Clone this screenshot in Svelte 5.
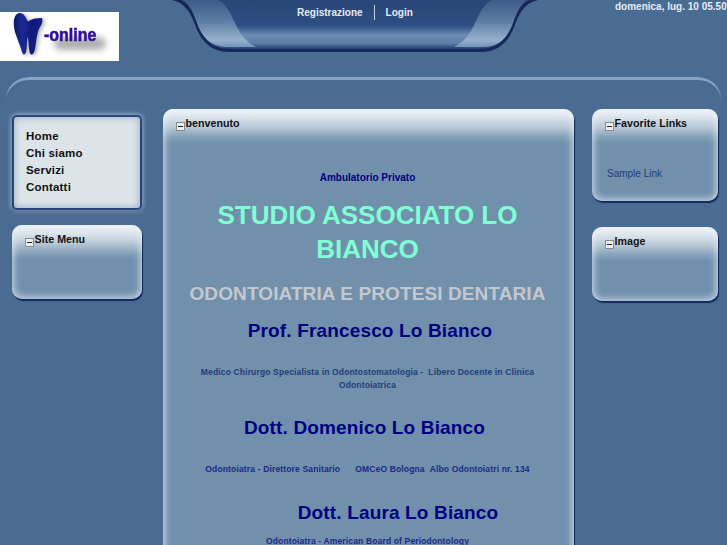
<script>
	const menu = ['Home', 'Chi siamo', 'Servizi', 'Contatti'];
</script>

<div class="page">
	<header class="top">
		<div class="logo">
			<svg class="tooth" width="34" height="46" viewBox="0 0 34 46">
				<defs>
					<linearGradient id="toothFill" x1="0" x2="1" y1="0" y2="0">
						<stop offset="0" stop-color="#0c1668" />
						<stop offset="0.3" stop-color="#1c2a96" />
						<stop offset="0.6" stop-color="#101a78" />
						<stop offset="1" stop-color="#141f86" />
					</linearGradient>
				</defs>
				<path d="M2 8 C3 3 5 1 8 1 C11 1 13 4 14 6 C15 8 15.5 9 16 9.5 C18 8 20 7 23 6.5 L30 6 C31 9 30 12 28 15 C25 20 24.5 28 23.5 34 C23 38 22 42 20 42.5 C18 43 17.5 40 17 36 C16.5 32 16.5 27 15.5 25 C15 28 15 36 14 40 C13 43.5 11 43 10 40 C8 33 5 26 3 20 C2 16 1.5 12 2 8 Z" fill="url(#toothFill)" />
			</svg>
			<div class="blur"></div>
			<span class="logo-text">-online</span>
		</div>

		<div class="notch">
			<svg width="366" height="53" viewBox="0 0 366 53">
				<defs>
					<linearGradient id="notchBody" x1="0" x2="0" y1="0" y2="1">
						<stop offset="0" stop-color="#284678" />
						<stop offset="0.52" stop-color="#2f4f82" />
						<stop offset="0.72" stop-color="#6a8cb4" />
						<stop offset="0.88" stop-color="#5e7fa8" />
						<stop offset="1" stop-color="#223c70" />
					</linearGradient>
					<linearGradient id="notchSide" x1="0" x2="0" y1="0" y2="1">
						<stop offset="0" stop-color="#3d5c8a" />
						<stop offset="0.45" stop-color="#5c7da4" />
						<stop offset="0.85" stop-color="#96b1cc" />
						<stop offset="1" stop-color="#7394ba" />
					</linearGradient>
				</defs>
				<path d="M0 0 C12 3 17 10 22 22 C28 40 38 52 58 52 L308 52 C328 52 338 40 344 22 C349 10 354 3 366 0 Z" fill="#16275a" />
				<path d="M9 0 C17 4 21 11 25 22 C31 38 40 49 58 49 L308 49 C326 49 335 38 341 22 C345 11 349 4 357 0 Z" fill="url(#notchBody)" />
				<path d="M11 0 C18 5 21 12 25 23 C30 37 38 46 54 47 L84 47 C72 41 66 30 61 19 C57 9 52 3 46 0 Z" fill="url(#notchSide)" />
				<path d="M355 0 C348 5 345 12 341 23 C336 37 328 46 312 47 L282 47 C294 41 300 30 305 19 C309 9 314 3 320 0 Z" fill="url(#notchSide)" />
			</svg>
			<nav class="user-links">
				<span>Registrazione</span>
				<i></i>
				<span>Login</span>
			</nav>
		</div>

		<div class="date">domenica, lug. 10 05.50</div>
	</header>

	<div class="band"></div>

	<main class="columns">
		<aside class="left">
			<nav class="menu">
				{#each menu as item}
					<div>{item}</div>
				{/each}
			</nav>
			<section class="panel site-menu">
				<h3><span class="toggle"></span>Site Menu</h3>
			</section>
		</aside>

		<section class="panel center">
			<h3><span class="toggle"></span>benvenuto</h3>
			<div class="body">
				<p class="lead">Ambulatorio Privato</p>
				<h1>STUDIO ASSOCIATO LO BIANCO</h1>
				<h2>ODONTOIATRIA E PROTESI DENTARIA</h2>
				<h4 class="first">Prof. Francesco Lo Bianco</h4>
				<p class="note">Medico Chirurgo Specialista in Odontostomatologia - &nbsp;Libero Docente in Clinica Odontoiatrica</p>
				<h4 class="second">Dott. Domenico Lo Bianco</h4>
				<p class="note dark">Odontoiatra - Direttore Sanitario &nbsp; &nbsp; &nbsp;OMCeO Bologna &nbsp;Albo Odontoiatri nr. 134</p>
				<h4 class="third">Dott. Laura Lo Bianco</h4>
				<p class="note dark last">Odontoiatra - American Board of Periodontology</p>
			</div>
		</section>

		<aside class="right">
			<section class="panel favorites">
				<h3><span class="toggle"></span>Favorite Links</h3>
				<a href="#top">Sample Link</a>
			</section>
			<section class="panel image">
				<h3><span class="toggle"></span>Image</h3>
			</section>
		</aside>
	</main>
</div>

<style>
	:global(body) {
		margin: 0;
		background: #4a6b92;
	}

	.page {
		height: 545px;
		overflow: hidden;
		font-family: 'Liberation Sans', Arial, sans-serif;
		background: #4a6b92;
	}

	.top {
		display: flex;
		height: 77px;
	}

	.logo {
		position: relative;
		flex: none;
		width: 119px;
		height: 49px;
		margin-top: 12px;
		background: #fff;
	}

	.tooth {
		position: absolute;
		left: 12px;
		top: 0;
		filter: drop-shadow(2px 1px 2px #aaa);
	}

	.blur {
		position: absolute;
		left: 54px;
		top: 25px;
		width: 52px;
		height: 13px;
		border-radius: 8px;
		background: #b0b0b0;
		filter: blur(3px);
	}

	.logo-text {
		position: absolute;
		left: 44px;
		top: 11px;
		font-size: 19px;
		font-weight: 700;
		line-height: 24px;
		color: #300f98;
		-webkit-text-stroke: 0.6px #300f98;
		transform: scaleX(0.84);
		transform-origin: left center;
	}

	.notch {
		position: relative;
		flex: none;
		width: 366px;
		height: 53px;
		margin-left: 53px;
	}

	.notch svg {
		display: block;
	}

	.user-links {
		position: absolute;
		left: 125px;
		top: 4px;
		display: flex;
		align-items: center;
		gap: 11px;
		height: 16px;
		font-size: 10px;
		font-weight: 700;
		color: #e6ecf2;
	}

	.user-links i {
		width: 1px;
		height: 15px;
		background: #c3d0de;
	}

	.date {
		flex: none;
		margin-left: 77px;
		padding-top: 1px;
		font-size: 10px;
		font-weight: 700;
		line-height: 12px;
		white-space: nowrap;
		color: #e6ecf2;
	}

	.band {
		box-sizing: border-box;
		height: 32px;
		margin: 0 5px;
		border-top: 3px solid #86a3c2;
		border-left: 1px solid #7c9abb;
		border-right: 1px solid #7c9abb;
		border-radius: 24px 24px 0 0;
		-webkit-mask: linear-gradient(#000, #000 10px, transparent 26px);
		mask: linear-gradient(#000, #000 10px, transparent 26px);
	}

	.columns {
		display: flex;
		align-items: flex-start;
		padding-left: 12px;
	}

	.left {
		flex: none;
		width: 130px;
		padding-top: 6px;
	}

	.menu {
		box-sizing: border-box;
		height: 95px;
		padding: 10.5px 12px;
		border-radius: 5px;
		background: #dce4e8;
		border: 2px solid #2a4678;
		box-shadow: 0 0 4px 1px #9db6ce, 0 1px 1px 1px #2a4678, inset 0 0 6px 1px #9fb4c8;
		font-size: 11.5px;
		font-weight: 700;
		line-height: 17.3px;
		letter-spacing: 0.2px;
		color: #111;
	}

	.panel {
		box-sizing: border-box;
		border-radius: 10px;
		background: linear-gradient(#eef3f7 0, #dce5ec 8px, #b8c9d6 18px, #8ba5bc 27px, #7090ac 34px);
		box-shadow: inset 0 0 7px 2px rgba(235, 242, 248, 0.7), 1px 2px 1px #14285e;
	}

	.panel h3 {
		display: flex;
		align-items: flex-end;
		margin: 0;
		padding: 8px 0 0 13px;
		font-size: 10.7px;
		font-weight: 700;
		line-height: 12px;
		color: #111;
	}

	.toggle {
		position: relative;
		flex: none;
		box-sizing: border-box;
		width: 9px;
		height: 9px;
		margin-right: 0.6px;
		margin-bottom: -2px;
		border: 1px solid #8a8a8a;
		background: #eee;
	}

	.toggle::after {
		content: '';
		position: absolute;
		left: 1px;
		top: 3px;
		width: 5px;
		height: 1px;
		background: #222;
	}

	.site-menu {
		height: 74px;
		margin-top: 15px;
	}

	.center {
		flex: none;
		width: 411px;
		height: 470px;
		margin-left: 21px;
	}

	.body {
		padding: 0 21px 0 19px;
		text-align: center;
		color: #000080;
	}

	.body p,
	.body h1,
	.body h2,
	.body h4 {
		margin: 0;
	}

	.lead {
		padding-top: 43px;
		font-size: 10px;
		font-weight: 700;
		line-height: 12px;
	}

	h1 {
		padding-top: 14px;
		font-size: 26px;
		font-weight: 700;
		line-height: 34px;
		color: #7fffd4;
	}

	h2 {
		padding-top: 16px;
		font-size: 19px;
		font-weight: 700;
		line-height: 24px;
		letter-spacing: 0.1px;
		color: #c4c8cc;
	}

	h4 {
		padding-top: 13px;
		font-size: 19px;
		font-weight: 700;
		line-height: 24px;
		letter-spacing: 0.15px;
	}

	.first {
		padding-left: 5px;
	}

	.note {
		padding-top: 23px;
		font-size: 8.5px;
		font-weight: 700;
		line-height: 13px;
		letter-spacing: 0.15px;
		color: #1f3f78;
	}

	.note.dark {
		color: #1a2a88;
	}

	.second {
		padding-top: 24px;
		padding-right: 6px;
	}

	.third {
		padding-top: 25px;
		padding-left: 61px;
	}

	.note.last {
		padding-top: 10px;
	}

	.right {
		flex: none;
		width: 126px;
		margin-left: 18px;
	}

	.favorites {
		height: 92px;
	}

	.favorites a {
		display: block;
		padding: 39px 0 0 15px;
		font-size: 10px;
		line-height: 12px;
		color: #1f3f78;
		text-decoration: none;
	}

	.image {
		height: 74px;
		margin-top: 26px;
	}
</style>
